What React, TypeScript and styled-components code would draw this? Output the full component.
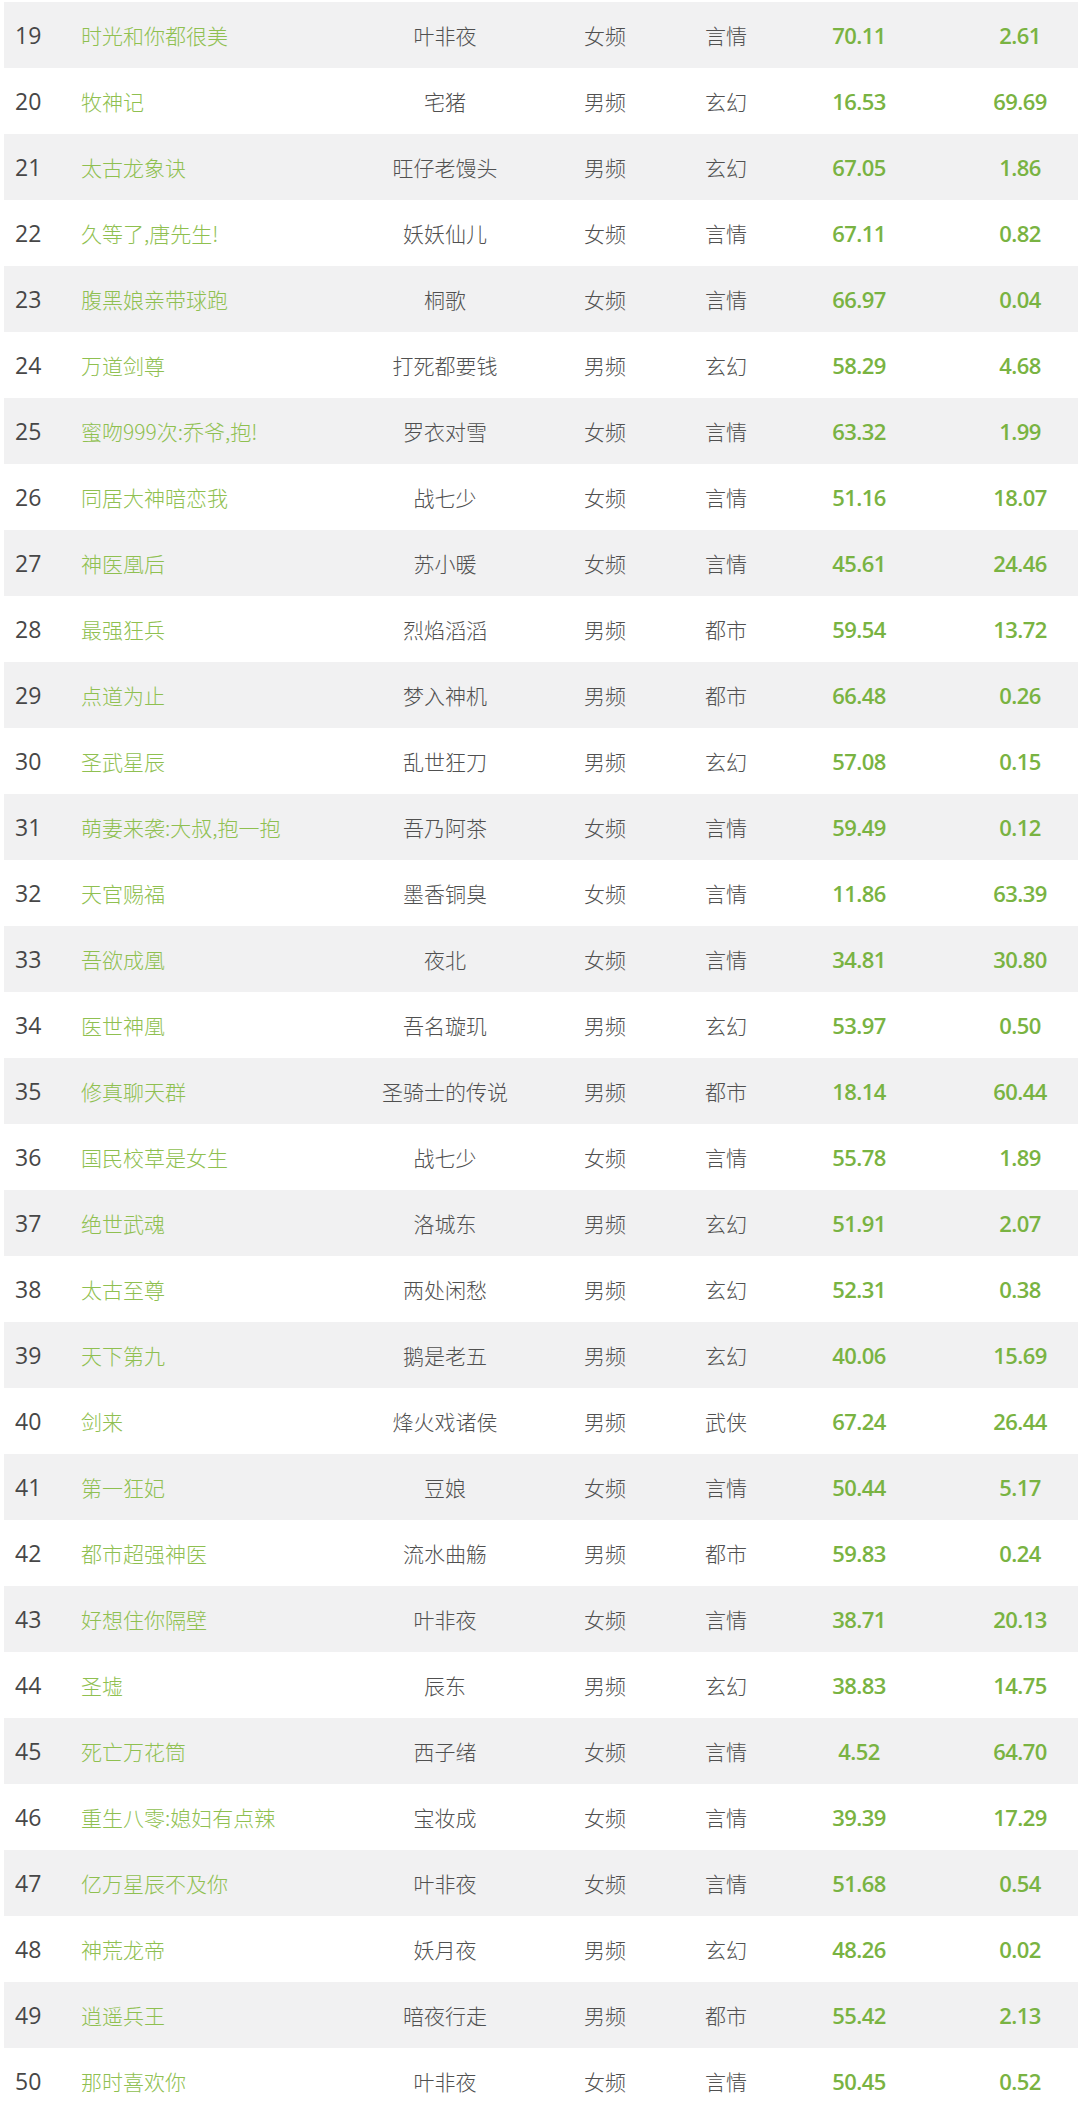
import React from 'react';
import styled, { createGlobalStyle } from 'styled-components';

type Book = [number, string, string, string, string, string, string];

const books: Book[] = [
    [19, '时光和你都很美', '叶非夜', '女频', '言情', '70.11', '2.61'],
    [20, '牧神记', '宅猪', '男频', '玄幻', '16.53', '69.69'],
    [21, '太古龙象诀', '旺仔老馒头', '男频', '玄幻', '67.05', '1.86'],
    [22, '久等了,唐先生!', '妖妖仙儿', '女频', '言情', '67.11', '0.82'],
    [23, '腹黑娘亲带球跑', '桐歌', '女频', '言情', '66.97', '0.04'],
    [24, '万道剑尊', '打死都要钱', '男频', '玄幻', '58.29', '4.68'],
    [25, '蜜吻999次:乔爷,抱!', '罗衣对雪', '女频', '言情', '63.32', '1.99'],
    [26, '同居大神暗恋我', '战七少', '女频', '言情', '51.16', '18.07'],
    [27, '神医凰后', '苏小暖', '女频', '言情', '45.61', '24.46'],
    [28, '最强狂兵', '烈焰滔滔', '男频', '都市', '59.54', '13.72'],
    [29, '点道为止', '梦入神机', '男频', '都市', '66.48', '0.26'],
    [30, '圣武星辰', '乱世狂刀', '男频', '玄幻', '57.08', '0.15'],
    [31, '萌妻来袭:大叔,抱一抱', '吾乃阿茶', '女频', '言情', '59.49', '0.12'],
    [32, '天官赐福', '墨香铜臭', '女频', '言情', '11.86', '63.39'],
    [33, '吾欲成凰', '夜北', '女频', '言情', '34.81', '30.80'],
    [34, '医世神凰', '吾名璇玑', '男频', '玄幻', '53.97', '0.50'],
    [35, '修真聊天群', '圣骑士的传说', '男频', '都市', '18.14', '60.44'],
    [36, '国民校草是女生', '战七少', '女频', '言情', '55.78', '1.89'],
    [37, '绝世武魂', '洛城东', '男频', '玄幻', '51.91', '2.07'],
    [38, '太古至尊', '两处闲愁', '男频', '玄幻', '52.31', '0.38'],
    [39, '天下第九', '鹅是老五', '男频', '玄幻', '40.06', '15.69'],
    [40, '剑来', '烽火戏诸侯', '男频', '武侠', '67.24', '26.44'],
    [41, '第一狂妃', '豆娘', '女频', '言情', '50.44', '5.17'],
    [42, '都市超强神医', '流水曲觞', '男频', '都市', '59.83', '0.24'],
    [43, '好想住你隔壁', '叶非夜', '女频', '言情', '38.71', '20.13'],
    [44, '圣墟', '辰东', '男频', '玄幻', '38.83', '14.75'],
    [45, '死亡万花筒', '西子绪', '女频', '言情', '4.52', '64.70'],
    [46, '重生八零:媳妇有点辣', '宝妆成', '女频', '言情', '39.39', '17.29'],
    [47, '亿万星辰不及你', '叶非夜', '女频', '言情', '51.68', '0.54'],
    [48, '神荒龙帝', '妖月夜', '男频', '玄幻', '48.26', '0.02'],
    [49, '逍遥兵王', '暗夜行走', '男频', '都市', '55.42', '2.13'],
    [50, '那时喜欢你', '叶非夜', '女频', '言情', '50.45', '0.52'],
];

const App: React.FC = () => {
    return (
        <Wrapper>
            <GlobalStyle />
            {books.map(([rank, title, author, channel, genre, a, b], i) => (
                <Row key={rank} $striped={i % 2 === 0}>
                    <Rank>{rank}</Rank>
                    <Title>{title}</Title>
                    <Plain>{author}</Plain>
                    <Plain>{channel}</Plain>
                    <Plain>{genre}</Plain>
                    <Num>{a}</Num>
                    <Num>{b}</Num>
                </Row>
            ))}
        </Wrapper>
    );
};

const GlobalStyle = createGlobalStyle`
  body {
    margin: 0;
    background: #fff;
  }
`;

const Wrapper = styled.div`
  width: 1080px;
  padding: 2px 2px 0 4px;
  box-sizing: border-box;
  font-family: "Noto Sans CJK SC", "Noto Sans", sans-serif;
`;

/* 每行：灰白相间 */
const Row = styled.div<{ $striped: boolean }>`
  display: grid;
  grid-template-columns: 77px 295px 138px 182px 60px 206px 116px;
  align-items: center;
  height: 66px;
  background: ${({ $striped }) => ($striped ? '#f1f1f2' : '#fff')};
`;

const Rank = styled.div`
  padding-left: 11px;
  font-family: "Open Sans", "Noto Sans", sans-serif;
  font-size: 23px;
  color: #474747;
`;

const Title = styled.div`
  font-size: 21px;
  font-weight: 300;
  color: #8fc050;
  white-space: nowrap;
`;

const Plain = styled.div`
  text-align: center;
  font-size: 21px;
  font-weight: 300;
  color: #505050;
  white-space: nowrap;
`;

const Num = styled.div`
  text-align: center;
  font-family: "Open Sans", "Noto Sans", sans-serif;
  font-weight: 600;
  font-size: 22px;
  letter-spacing: -0.6px;
  color: #79b342;
`;

export default App;
